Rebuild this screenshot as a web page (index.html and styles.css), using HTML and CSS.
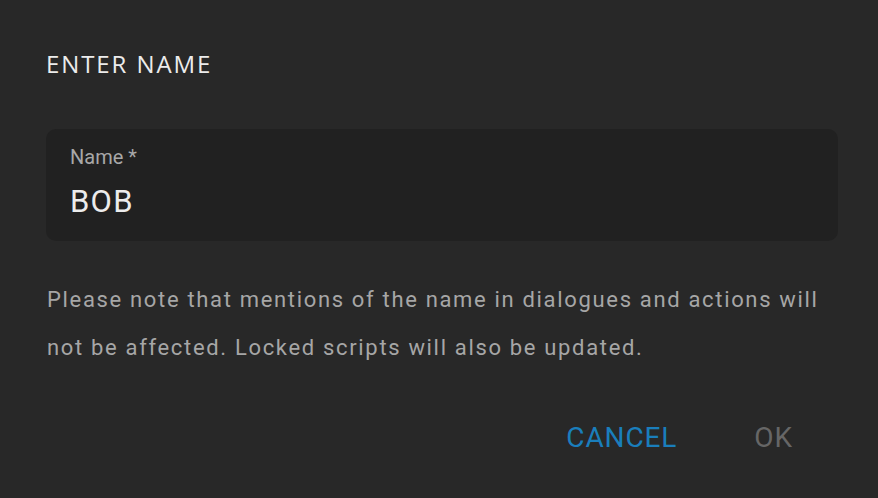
FILE: index.html
```html
<!DOCTYPE html>
<html>
<head>
<meta charset="utf-8">
<link rel="stylesheet" href="styles.css">
</head>
<body>
<div class="dialog">
  <h2 class="title">ENTER NAME</h2>
  <div class="field">
    <label class="label">Name *</label>
    <div class="value">BOB</div>
  </div>
  <p class="note">Please note that mentions of the name in dialogues and actions will not be affected. Locked scripts will also be updated.</p>
  <div class="actions">
    <button class="btn btn-cancel">CANCEL</button>
    <button class="btn btn-ok">OK</button>
  </div>
</div>
</body>
</html>
```
FILE: styles.css
```css
html, body {
  margin: 0;
  padding: 0;
  background: #282828;
  width: 878px;
  height: 498px;
  overflow: hidden;
}
.dialog {
  padding: 48px 40px 0 46px;
  font-family: Roboto, "Liberation Sans", sans-serif;
}
.title {
  margin: 0;
  font-family: "Open Sans", sans-serif;
  font-weight: 400;
  font-size: 24px;
  line-height: 32px;
  letter-spacing: 1.9px;
  color: #ececec;
}
.field {
  margin-top: 49px;
  background: #212121;
  border-radius: 10px;
  height: 112px;
  padding: 16px 24px 0 24px;
  box-sizing: border-box;
}
.label {
  display: block;
  font-size: 20px;
  line-height: 24px;
  color: #a8a8a8;
}
.value {
  margin-top: 15px;
  font-size: 31px;
  line-height: 36px;
  color: #ececec;
  letter-spacing: 1.3px;
}
.note {
  margin: 35px 0 0 1px;
  font-size: 22px;
  line-height: 48px;
  letter-spacing: 1.67px;
  color: #a6a6a6;
}
.actions {
  display: flex;
  justify-content: flex-end;
  margin-top: 50px;
  padding-right: 45px;
  gap: 77px;
}
.btn {
  background: none;
  border: none;
  padding: 0;
  font-family: Roboto, sans-serif;
  font-size: 28px;
  letter-spacing: 0.9px;
  line-height: 32px;
  cursor: pointer;
}
.btn-cancel { color: #1a7ebc; }
.btn-ok { color: #666666; }
```
